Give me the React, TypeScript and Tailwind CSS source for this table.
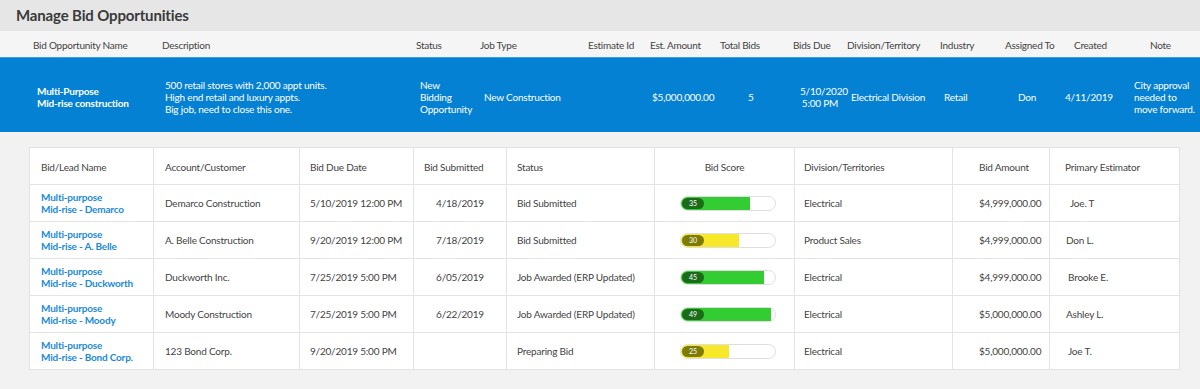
import type { ReactNode } from "react";

const font = { fontFamily: "Lato, 'Open Sans', sans-serif" };

const topCols =
  "grid grid-cols-[155px_255px_64px_108px_62px_70px_72px_54px_94px_64px_64px_66px_72px]";

const TopHeader = () => (
  <div
    className={`${topCols} h-[26px] items-center whitespace-nowrap bg-[#f5f5f5] pt-[2px] text-[10px] tracking-[-0.25px] text-[#444]`}
  >
    <div className="pl-[33px]">Bid Opportunity Name</div>
    <div className="pl-[7px]">Description</div>
    <div className="pl-[6px]">Status</div>
    <div className="pl-[6px]">Job Type</div>
    <div className="pl-[6px]">Estimate Id</div>
    <div className="pl-[6px]">Est. Amount</div>
    <div className="pl-[6px]">Total Bids</div>
    <div className="pl-[7px]">Bids Due</div>
    <div className="pl-[7px]">Division/Territory</div>
    <div className="pl-[6px]">Industry</div>
    <div className="pl-[7px]">Assigned To</div>
    <div className="pl-[12px]">Created</div>
    <div className="pl-[22px]">Note</div>
  </div>
);

const BlueRow = () => (
  <div
    className={`${topCols} h-[75px] items-center whitespace-nowrap bg-[#0481d3] border-t border-[#3b9ee0] pt-[3px] text-[10px] leading-[12px] tracking-[-0.2px] text-white`}
  >
    <div className="pl-[37px] font-bold">
      Multi-Purpose
      <br />
      Mid-rise construction
    </div>
    <div className="pl-[10px]">
      500 retail stores with 2,000 appt units.
      <br />
      High end retail and luxury appts.
      <br />
      Big job, need to close this one.
    </div>
    <div className="pl-[10px]">
      New
      <br />
      Bidding
      <br />
      Opportunity
    </div>
    <div className="pl-[10px]">New Construction</div>
    <div />
    <div className="pl-[8px]">$5,000,000.00</div>
    <div className="pl-[34px]">5</div>
    <div className="pl-[14px] text-center">
      5/10/2020
      <br />
      5:00 PM
    </div>
    <div className="pl-[11px]">Electrical Division</div>
    <div className="pl-[10px]">Retail</div>
    <div className="pl-[20px]">Don</div>
    <div className="pl-[3px]">4/11/2019</div>
    <div className="pl-[6px]">
      City approval
      <br />
      needed to
      <br />
      move forward.
    </div>
  </div>
);

type Bid = {
  name: string;
  account: string;
  due: string;
  submitted: string;
  status: string;
  score: number;
  fill: number;
  division: string;
  amount: string;
  estimator: string;
  estPad: string;
};

const bids: Bid[] = [
  {
    name: "Demarco",
    account: "Demarco Construction",
    due: "5/10/2019 12:00 PM",
    submitted: "4/18/2019",
    status: "Bid Submitted",
    score: 35,
    fill: 69,
    division: "Electrical",
    amount: "$4,999,000.00",
    estimator: "Joe. T",
    estPad: "pl-[20px]",
  },
  {
    name: "A. Belle",
    account: "A. Belle Construction",
    due: "9/20/2019 12:00 PM",
    submitted: "7/18/2019",
    status: "Bid Submitted",
    score: 30,
    fill: 58,
    division: "Product Sales",
    amount: "$4,999,000.00",
    estimator: "Don L.",
    estPad: "pl-[16px]",
  },
  {
    name: "Duckworth",
    account: "Duckworth Inc.",
    due: "7/25/2019 5:00 PM",
    submitted: "6/05/2019",
    status: "Job Awarded (ERP Updated)",
    score: 45,
    fill: 83,
    division: "Electrical",
    amount: "$4,999,000.00",
    estimator: "Brooke E.",
    estPad: "pl-[18px]",
  },
  {
    name: "Moody",
    account: "Moody Construction",
    due: "7/25/2019 5:00 PM",
    submitted: "6/22/2019",
    status: "Job Awarded (ERP Updated)",
    score: 49,
    fill: 90,
    division: "Electrical",
    amount: "$5,000,000.00",
    estimator: "Ashley L.",
    estPad: "pl-[16px]",
  },
  {
    name: "Bond Corp.",
    account: "123 Bond Corp.",
    due: "9/20/2019 5:00 PM",
    submitted: "",
    status: "Preparing Bid",
    score: 25,
    fill: 48,
    division: "Electrical",
    amount: "$5,000,000.00",
    estimator: "Joe T.",
    estPad: "pl-[18px]",
  },
];

const tableCols =
  "grid grid-cols-[123px_146px_114px_93px_148px_140px_158px_97px_1fr]";

const Cell = ({ children, className = "" }: { children?: ReactNode; className?: string }) => (
  <div className={`flex items-center border-l border-[#e4e4e4] first:border-l-0 ${className}`}>
    {children}
  </div>
);

const ScoreBar = ({ score, fill }: { score: number; fill: number }) => {
  const green = score >= 35;
  return (
    <div className="relative h-[15px] w-[96px] rounded-full border border-[#dedede] bg-white">
      <div
        className={`absolute left-0 top-0 h-[13px] rounded-l-full ${green ? "bg-[#33cc33]" : "bg-[#f7e92a]"}`}
        style={{ width: fill }}
      />
      <div
        className={`absolute left-[1px] top-[1px] flex h-[11px] w-[22px] items-center justify-center rounded-full text-[7px] tracking-normal text-white ${green ? "bg-[#1b6b1b]" : "bg-[#7d7b05]"}`}
      >
        {score}
      </div>
    </div>
  );
};

const BidTable = () => (
  <div className="ml-[29px] w-[1151px] whitespace-nowrap border border-[#e2e2e2] bg-white text-[10px] tracking-[-0.2px] text-[#444]">
    <div className={`${tableCols} h-[36px]`}>
      <Cell className="pl-[11px] pt-[2px]">Bid/Lead Name</Cell>
      <Cell className="pl-[11px] pt-[2px]">Account/Customer</Cell>
      <Cell className="pl-[10px] pt-[2px]">Bid Due Date</Cell>
      <Cell className="pl-[10px] pt-[2px]">Bid Submitted</Cell>
      <Cell className="pl-[10px] pt-[2px]">Status</Cell>
      <Cell className="justify-center pt-[2px]">Bid Score</Cell>
      <Cell className="pl-[9px] pt-[2px]">Division/Territories</Cell>
      <Cell className="pl-[26px] pt-[2px]">Bid Amount</Cell>
      <Cell className="pl-[15px] pt-[2px]">Primary Estimator</Cell>
    </div>
    {bids.map((b) => (
      <div key={b.name} className={`${tableCols} h-[37px] border-t border-[#e4e4e4]`}>
        <Cell className="pl-[11px] font-bold leading-[12px] text-[#1b8ad8]">
          <div>
            Multi-purpose
            <br />
            Mid-rise - {b.name}
          </div>
        </Cell>
        <Cell className="pl-[11px]">{b.account}</Cell>
        <Cell className="pl-[10px]">{b.due}</Cell>
        <Cell className="justify-center">{b.submitted}</Cell>
        <Cell className="pl-[10px]">{b.status}</Cell>
        <Cell className="pl-[25px]">
          <ScoreBar score={b.score} fill={b.fill} />
        </Cell>
        <Cell className="pl-[9px]">{b.division}</Cell>
        <Cell className="pl-[26px]">{b.amount}</Cell>
        <Cell className={b.estPad}>{b.estimator}</Cell>
      </div>
    ))}
  </div>
);

export default function App() {
  return (
    <div className="h-[389px] w-[1200px] overflow-hidden bg-[#f2f2f2]" style={font}>
      <div className="flex h-[31px] items-center bg-[#e6e6e6] pl-[16px]">
        <h1 className="text-[15px] font-bold tracking-[-0.15px] text-[#3a3a3a]">
          Manage Bid Opportunities
        </h1>
      </div>
      <TopHeader />
      <BlueRow />
      <div className="pt-[15px]">
        <BidTable />
      </div>
    </div>
  );
}
